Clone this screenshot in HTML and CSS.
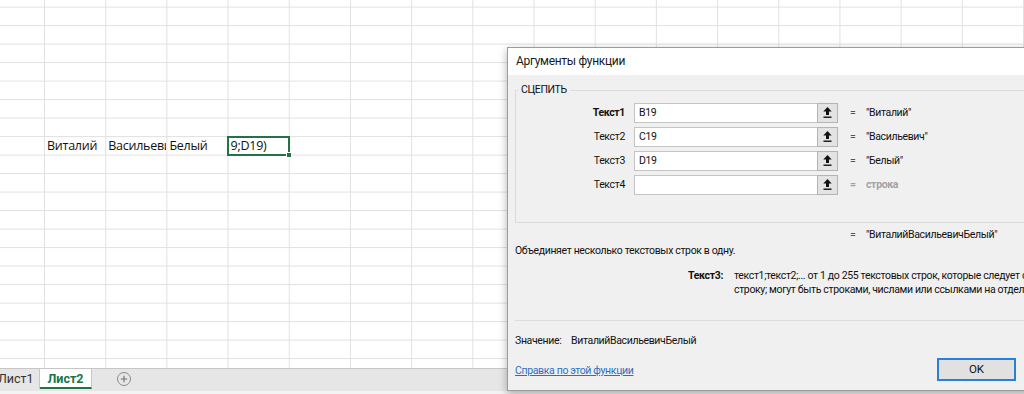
FILE: index.html
```html
<!DOCTYPE html>
<html>
<head>
	<meta charset="UTF-8">
	<meta name="viewport" content="width=device-width, initial-scale=1">

	<title>Аргументы функции</title>

	<link rel="stylesheet" href="styles.css">
</head>
<body>

	<div class="workbook">
		<div class="sheet">
			<div class="cell col-b">Виталий</div>
			<div class="cell col-c">Васильевич</div>
			<div class="cell col-d">Белый</div>
			<div class="cell col-e active-cell">9;D19)</div>
		</div>
		<div class="sheet-tabs">
			<span class="tab first-tab">Лист1</span>
			<span class="tab active-tab">Лист2</span>
			<span class="add-sheet">
				<svg width="16" height="16" viewBox="0 0 16 16">
					<circle cx="8" cy="8" r="6.5" fill="none" stroke="#8a8a8a" stroke-width="1"/>
					<path d="M8 4.8 V11.2 M4.8 8 H11.2" stroke="#6e6e6e" stroke-width="1.1"/>
				</svg>
			</span>
		</div>
		<div class="status-strip"></div>
	</div>

	<div class="dialog">
		<div class="dialog-title">Аргументы функции</div>
		<div class="dialog-body">
			<fieldset class="func-box">
				<legend>СЦЕПИТЬ</legend>
				<div class="arg current-arg">
					<span class="arg-label">Текст1</span>
					<span class="arg-input">B19</span>
					<span class="ref-btn">
						<svg width="19" height="18" viewBox="0 0 19 18"><path d="M9.5 3 L5.3 7.6 H8 V11 H11 V7.6 H13.7 Z" fill="#111"/><rect x="5.5" y="12.5" width="8" height="1.4" fill="#111"/></svg>
					</span>
					<span class="eq">=</span>
					<span class="arg-value">"Виталий"</span>
				</div>
				<div class="arg">
					<span class="arg-label">Текст2</span>
					<span class="arg-input">C19</span>
					<span class="ref-btn">
						<svg width="19" height="18" viewBox="0 0 19 18"><path d="M9.5 3 L5.3 7.6 H8 V11 H11 V7.6 H13.7 Z" fill="#111"/><rect x="5.5" y="12.5" width="8" height="1.4" fill="#111"/></svg>
					</span>
					<span class="eq">=</span>
					<span class="arg-value">"Васильевич"</span>
				</div>
				<div class="arg">
					<span class="arg-label">Текст3</span>
					<span class="arg-input">D19</span>
					<span class="ref-btn">
						<svg width="19" height="18" viewBox="0 0 19 18"><path d="M9.5 3 L5.3 7.6 H8 V11 H11 V7.6 H13.7 Z" fill="#111"/><rect x="5.5" y="12.5" width="8" height="1.4" fill="#111"/></svg>
					</span>
					<span class="eq">=</span>
					<span class="arg-value">"Белый"</span>
				</div>
				<div class="arg">
					<span class="arg-label">Текст4</span>
					<span class="arg-input"></span>
					<span class="ref-btn">
						<svg width="19" height="18" viewBox="0 0 19 18"><path d="M9.5 3 L5.3 7.6 H8 V11 H11 V7.6 H13.7 Z" fill="#111"/><rect x="5.5" y="12.5" width="8" height="1.4" fill="#111"/></svg>
					</span>
					<span class="eq muted">=</span>
					<span class="arg-value muted">строка</span>
				</div>
			</fieldset>

			<div class="result"><span class="eq">=</span><span>"ВиталийВасильевичБелый"</span></div>
			<div class="func-desc">Объединяет несколько текстовых строк в одну.</div>
			<div class="arg-help">
				<strong>Текст3:</strong>
				<span>текст1;текст2;... от 1 до 255 текстовых строк, которые следует объединить в одну<br>строку; могут быть строками, числами или ссылками на отдельные ячейки.</span>
			</div>
			<hr>
			<div class="value-line"><span class="value-label">Значение:</span><span>ВиталийВасильевичБелый</span></div>
			<div class="dialog-footer">
				<a href="#" class="help-link">Справка по этой функции</a>
				<span class="ok-btn">OK</span>
			</div>
		</div>
	</div>
</body>
</html>
```

FILE: styles.css
```css
:root {
	--col-grid: #e1e1e1;
	--col-excel: #217346;
	--col-panel: #f0f0f0;
	--col-frame: #dcdcdc;
	--font-ui: Roboto, 'Liberation Sans', sans-serif;
	--font-cell: 'Open Sans', 'Noto Sans', sans-serif;
	--col-width: 61.2px;
	--row-height: 18.5px;
}
body {
	margin: 0;
	padding: 0;
	width: 1024px;
	height: 394px;
	overflow: hidden;
	background: #fff;
}

/* sheet */
.sheet {
	height: 368px;
	display: grid;
	grid-template-columns: 44px repeat(16, var(--col-width));
	grid-template-rows: 7px repeat(19, var(--row-height));
	background-image:
		linear-gradient(to right, var(--col-grid) 1px, transparent 1px),
		linear-gradient(to bottom, var(--col-grid) 1px, transparent 1px);
	background-size: var(--col-width) 100%, 100% var(--row-height);
	background-position: 44px 0, 0 6.6px;
}
.cell {
	grid-row: 9;
	padding-left: 3px;
	font-family: var(--font-cell);
	font-size: 12.5px;
	letter-spacing: -0.25px;
	line-height: 18.5px;
	color: #111;
	white-space: nowrap;
	overflow: hidden;
}
.col-b { grid-column: 2; }
.col-c { grid-column: 3; }
.col-d { grid-column: 4; }
.col-e { grid-column: 5; }
.active-cell {
	position: relative;
	overflow: visible;
	margin: -1px;
	padding-left: 2px;
	border: 2px solid var(--col-excel);
	line-height: 16.5px;
}
.active-cell::after {
	content: '';
	position: absolute;
	right: -4px;
	bottom: -4px;
	width: 4px;
	height: 4px;
	background: var(--col-excel);
	border: 1px solid #fff;
}

/* tabs */
.sheet-tabs {
	height: 22px;
	display: flex;
	align-items: flex-start;
	background: #e6e6e6;
	border-top: 1px solid #c6c6c6;
	font-family: var(--font-ui);
	font-size: 12.5px;
	color: #333;
}
.tab {
	box-sizing: border-box;
	height: 20px;
	line-height: 20px;
	border-right: 1px solid #c6c6c6;
}
.first-tab {
	width: 42px;
	margin-left: -2px;
}
.active-tab {
	width: 52px;
	text-align: center;
	background: #fff;
	color: var(--col-excel);
	font-weight: bold;
	border-bottom: 2px solid var(--col-excel);
	line-height: 19px;
}
.add-sheet {
	margin: 2px 0 0 24px;
	height: 16px;
}
.status-strip {
	height: 3px;
	background: #f3f3f3;
}

/* dialog */
.dialog {
	position: absolute;
	left: 507px;
	top: 47px;
	width: 640px;
	height: 344px;
	box-sizing: border-box;
	border: 1px solid #9c9c9c;
	background: var(--col-panel);
	box-shadow: 0 3px 8px rgba(0,0,0,0.3);
	font-family: var(--font-ui);
	font-size: 10.5px;
	letter-spacing: -0.35px;
	line-height: 14px;
	color: #111;
}
.dialog-title {
	height: 27px;
	line-height: 27px;
	padding-left: 8px;
	background: #fff;
	font-size: 12px;
	letter-spacing: -0.3px;
	color: #1a1a1a;
}
.dialog-body {
	padding: 0 7px;
}
.func-box {
	margin: 8px 0 0 0;
	padding: 6px 0 27px 0;
	width: 560px;
	border: 1px solid var(--col-frame);
	min-width: 0;
}
.func-box legend {
	margin-left: 2px;
	padding: 0 3px;
	line-height: 14px;
}
.arg {
	display: flex;
	align-items: center;
	height: 20px;
	margin-bottom: 4px;
}
.arg:last-child {
	margin-bottom: 0;
}
.arg-label {
	width: 109px;
	margin-right: 9px;
	text-align: right;
}
.current-arg .arg-label {
	font-weight: bold;
}
.arg-input {
	box-sizing: border-box;
	width: 183px;
	height: 20px;
	line-height: 18px;
	padding-left: 4px;
	background: #fff;
	border: 1px solid #c4c4c4;
	border-right: none;
}
.ref-btn {
	box-sizing: border-box;
	width: 21px;
	height: 20px;
	background: #e3e3e3;
	border: 1px solid #b4b4b4;
}
.ref-btn svg {
	display: block;
}
.eq {
	width: 16px;
	margin-left: 12px;
	color: #555;
}
.muted {
	color: #a3a3a3;
	font-weight: bold;
}
.result {
	margin-top: 5px;
	padding-left: 335px;
	display: flex;
}
.result .eq {
	margin-left: 0;
}
.func-desc {
	margin-top: 2px;
}
.arg-help {
	margin-top: 11px;
	display: grid;
	grid-template-columns: 208px auto;
	column-gap: 11px;
	white-space: nowrap;
}
.arg-help strong {
	text-align: right;
}
.dialog-body hr {
	margin: 23px 0 0 0;
	border: none;
	border-top: 1px solid var(--col-frame);
}
.value-line {
	margin-top: 13px;
	display: flex;
}
.value-label {
	width: 56px;
}
.dialog-footer {
	width: 501px;
	margin-top: 10px;
	display: flex;
	justify-content: space-between;
	align-items: center;
}
.help-link {
	padding-top: 3px;
	color: #2b6fc2;
	text-decoration: underline;
}
.ok-btn {
	box-sizing: border-box;
	width: 79px;
	height: 23px;
	line-height: 19px;
	text-align: center;
	background: #e1e1e1;
	border: 2px solid #2c7fd4;
	font-size: 11.5px;
	letter-spacing: 0;
}
```
